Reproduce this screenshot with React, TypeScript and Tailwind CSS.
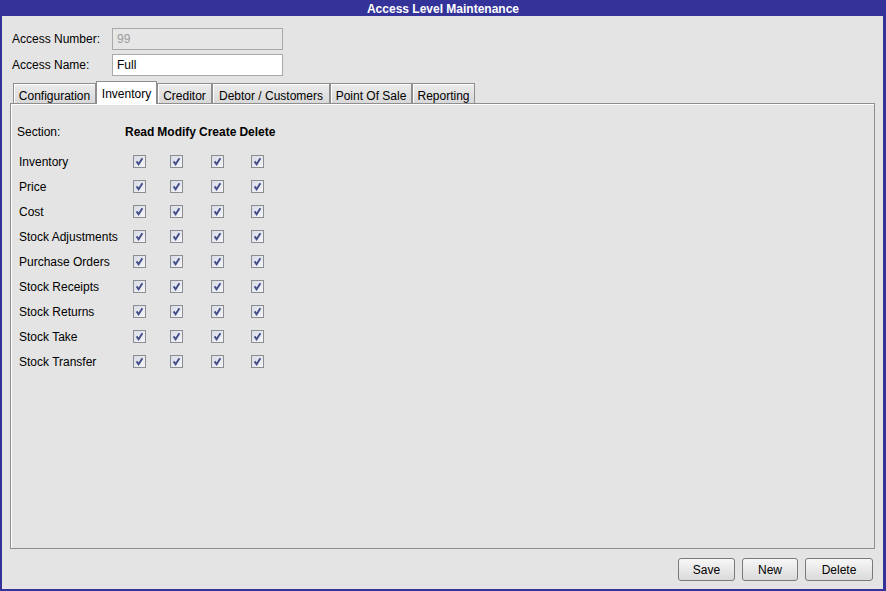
import React from "react"

const sections = [
  "Inventory",
  "Price",
  "Cost",
  "Stock Adjustments",
  "Purchase Orders",
  "Stock Receipts",
  "Stock Returns",
  "Stock Take",
  "Stock Transfer",
]

const tabs = [
  { label: "Configuration", w: "w-[83px]" },
  { label: "Inventory", w: "w-[61px]", active: true },
  { label: "Creditor", w: "w-[55px]" },
  { label: "Debtor / Customers", w: "w-[118px]" },
  { label: "Point Of Sale", w: "w-[82px]" },
  { label: "Reporting", w: "w-[63px]" },
]

function Check() {
  return (
    <svg width="13" height="13" viewBox="0 0 13 13" className="block">
      <defs>
        <linearGradient id="cb" x1="0" y1="0" x2="1" y2="1">
          <stop offset="0" stopColor="#d6dae5" />
          <stop offset="1" stopColor="#f6f7fa" />
        </linearGradient>
      </defs>
      <rect x="0.5" y="0.5" width="12" height="12" fill="url(#cb)" stroke="#8c8d90" />
      <path d="M3.6 6.4 L5.6 9.3 L9.4 3.2" stroke="#434d88" strokeWidth="1.9" fill="none" />
    </svg>
  )
}

function Field({ label, value, disabled }: { label: string; value: string; disabled?: boolean }) {
  return (
    <div className="flex h-[22px] items-center pl-[2px]">
      <span className="w-[100px] shrink-0">{label}</span>
      <div
        className={
          disabled
            ? "flex h-full w-[171px] items-center border border-[#a9a9a9] bg-[#e6e6e6] pl-[4px] text-[#9a9a9a]"
            : "flex h-full w-[171px] items-center border border-[#a9a9a9] bg-white pl-[4px] text-black"
        }
      >
        {value}
      </div>
    </div>
  )
}

function Button({ label, w }: { label: string; w: string }) {
  return (
    <div
      className={`flex h-[23px] ${w} items-center justify-center rounded-[3px] border border-[#7a7a7a] bg-gradient-to-b from-[#f7f7f7] to-[#dadada]`}
    >
      {label}
    </div>
  )
}

export default function App() {
  return (
    <div className="flex h-[591px] w-[886px] flex-col bg-[#333399] font-['Liberation_Sans',Arial,sans-serif] text-[12px] text-black">
      <div className="flex h-[16px] shrink-0 items-center justify-center pt-px font-bold text-white">
        Access Level Maintenance
      </div>
      <div className="mb-[2px] ml-[2px] mr-[3px] flex flex-1 flex-col bg-[#e4e4e4] px-[8px] pb-[8px] pt-[12px]">
        <div className="flex flex-col gap-[4px]">
          <Field label="Access Number:" value="99" disabled />
          <Field label="Access Name:" value="Full" />
        </div>

        <div className="relative z-10 -mb-px mt-[5px] flex h-[23px] items-end pl-[3px]">
          {tabs.map(t =>
            t.active ? (
              <div
                key={t.label}
                className={`flex h-[23px] ${t.w} items-start justify-center border border-b-0 border-[#8e8e8e] bg-white pt-[3px]`}
              >
                {t.label}
              </div>
            ) : (
              <div
                key={t.label}
                className={`mb-px flex h-[20px] ${t.w} items-start justify-center border border-b-0 border-[#8e8e8e] bg-gradient-to-b from-[#ececec] to-[#d8d8d8] pt-[3px] shadow-[inset_1px_1px_0_#ffffff]`}
              >
                {t.label}
              </div>
            )
          )}
        </div>

        <div className="flex-1 border border-[#8e8e8e] bg-[#e4e4e4] pl-[6px] pt-[15px] shadow-[inset_1px_1px_0_#ffffff]">
          <div className="grid grid-cols-[105px_auto_auto_auto_auto] justify-start gap-x-[3px]">
            <div className="flex h-[25px] items-center">Section:</div>
            {["Read", "Modify", "Create", "Delete"].map(h => (
              <div key={h} className="flex h-[25px] items-center justify-center font-bold">
                {h}
              </div>
            ))}
            <div className="col-span-5 h-[5px]" />
            {sections.map(s => (
              <React.Fragment key={s}>
                <div className="flex h-[25px] items-center pl-[2px]">{s}</div>
                {[0, 1, 2, 3].map(i => (
                  <div key={i} className="flex h-[25px] items-center justify-center">
                    <Check />
                  </div>
                ))}
              </React.Fragment>
            ))}
          </div>
        </div>

        <div className="mt-[9px] flex justify-end gap-[7px] pr-[2px]">
          <Button label="Save" w="w-[57px]" />
          <Button label="New" w="w-[56px]" />
          <Button label="Delete" w="w-[68px]" />
        </div>
      </div>
    </div>
  )
}
